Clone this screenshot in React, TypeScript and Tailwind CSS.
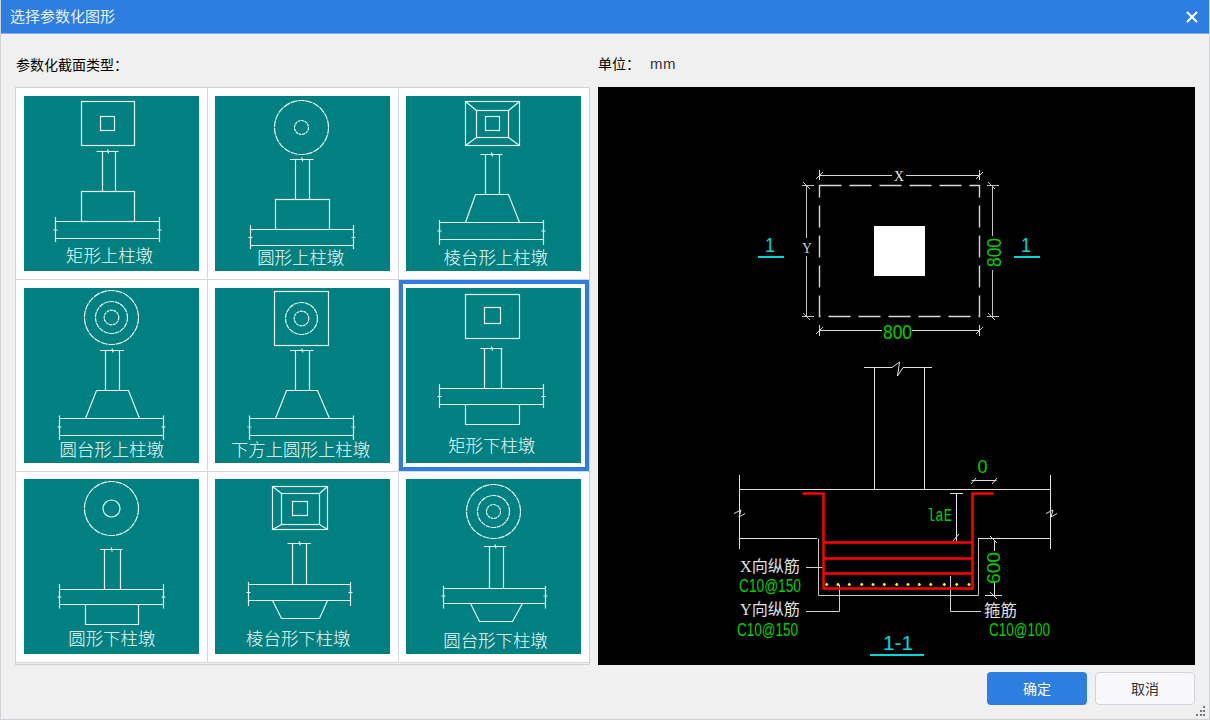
import type { ReactNode } from "react";
import { X } from "lucide-react";

const Stem = ({ a, b, top, bottom, l, r }: { a: number; b: number; top: number; bottom: number; l: number; r: number }) => {
  const mid = (l + r) / 2;
  return <path d={`M${l} ${top}H${r}M${a} ${top}V${bottom}M${b} ${top}V${bottom}M${mid} ${top - 2}l1 4`} />;
};

const Slab = ({ a, b, top, bottom, t1, t2 }: { a: number; b: number; top: number; bottom: number; t1: number; t2: number }) => {
  const mid = (top + bottom) / 2;
  return <path d={`M${a} ${top}H${b}M${a} ${bottom}H${b}M${a} ${t1}V${t2}M${b} ${t1}V${t2}M${a - 2} ${mid}h4M${b - 2} ${mid}h4`} />;
};

const Box = ({ x, y, w, h }: { x: number; y: number; w: number; h: number }) => <rect x={x} y={y} width={w} height={h} />;

const Thumb = ({ label, tx, ty, children }: { label: string; tx: number; ty: number; children: ReactNode }) => (
  <svg width="175" height="175" viewBox="0 0 175 175" className="block bg-[#008080]">
    <g fill="none" stroke="#e8f5f4" strokeWidth="1.2">{children}</g>
    <text
      x={tx}
      y={ty}
      textAnchor="middle"
      fill="#f4fbfa"
      className="font-['Noto_Sans_CJK_SC',sans-serif] text-[17.4px] font-light"
    >
      {label}
    </text>
  </svg>
);

const thumbs = [
  {
    label: "矩形上柱墩", tx: 85.5, ty: 166, cell: "pl-2 pt-2 border-r border-b",
    art: (
      <>
        <Box x={57.5} y={5.5} w={53} h={44} />
        <Box x={76.5} y={20.5} w={14} h={14} />
        <Stem a={78.5} b={91.5} top={55.5} bottom={95.5} l={72.5} r={94.5} />
        <Box x={57.5} y={95.5} w={53} h={30} />
        <Slab a={31.5} b={135.5} top={125.5} bottom={142.5} t1={121} t2={146} />
      </>
    ),
  },
  {
    label: "圆形上柱墩", tx: 85.7, ty: 168, cell: "pl-[7px] pt-2 border-r border-b",
    art: (
      <>
        <circle cx={86.5} cy={31.5} r={27} strokeDasharray="7 0.7" />
        <circle cx={86.5} cy={31.5} r={7} strokeDasharray="3 0.6" />
        <Stem a={80.5} b={94.5} top={63.5} bottom={103.5} l={75} r={98.5} />
        <Box x={60.5} y={103.5} w={54} h={30} />
        <Slab a={35.5} b={138.5} top={133.5} bottom={149.5} t1={129} t2={153} />
      </>
    ),
  },
  {
    label: "棱台形上柱墩", tx: 89.8, ty: 168, cell: "pl-[7px] pt-2 border-b",
    art: (
      <>
        <Box x={59.5} y={5.5} w={54} h={44} />
        <Box x={70.5} y={14.5} w={32} h={27} />
        <Box x={79.5} y={20.5} w={14} h={14} />
        <path d="M59.5 5.5L70.5 14.5M113.5 5.5L102.5 14.5M59.5 49.5L70.5 41.5M113.5 49.5L102.5 41.5" />
        <Stem a={79.5} b={93.5} top={58.5} bottom={98.5} l={74.5} r={96.5} />
        <path d="M69.5 98.5H102.5L113.5 126.5M69.5 98.5L59.5 126.5" />
        <Slab a={33.5} b={137.5} top={126.5} bottom={143.5} t1={124} t2={149} />
      </>
    ),
  },
  {
    label: "圆台形上柱墩", tx: 87.7, ty: 168, cell: "pl-2 pt-2 border-r border-b",
    art: (
      <>
        <circle cx={87.5} cy={29.5} r={27} strokeDasharray="7 0.7" />
        <circle cx={87.5} cy={29.5} r={16} strokeDasharray="5 0.6" />
        <circle cx={87.5} cy={29.5} r={7.3} strokeDasharray="3 0.6" />
        <Stem a={81.5} b={95.5} top={62.5} bottom={102.5} l={76} r={100} />
        <path d="M61.5 130.5L72.5 102.5H104.5L115.5 130.5" />
        <Slab a={35.5} b={139.5} top={130.5} bottom={147.5} t1={127.5} t2={152} />
      </>
    ),
  },
  {
    label: "下方上圆形上柱墩", tx: 85.5, ty: 168, cell: "pl-[7px] pt-2 border-r border-b",
    art: (
      <>
        <Box x={59.5} y={3.5} w={54} h={54} />
        <circle cx={86.5} cy={30.5} r={16} strokeDasharray="5 0.6" />
        <circle cx={86.5} cy={30.5} r={7.3} strokeDasharray="3 0.6" />
        <Stem a={80.5} b={94.5} top={62.5} bottom={102.5} l={75} r={98.5} />
        <path d="M60.5 130.5L71.5 102.5H102.5L114.5 130.5" />
        <Slab a={34.5} b={138.5} top={130.5} bottom={147.5} t1={127.5} t2={152} />
      </>
    ),
  },
  {
    label: "矩形下柱墩", tx: 85.7, ty: 164, cell: "relative pl-[7px] pt-2 border-b", selected: true,
    art: (
      <>
        <Box x={59.5} y={6.5} w={54} h={44} />
        <Box x={78.5} y={19.5} w={16} h={16} />
        <Stem a={78.5} b={95.5} top={60.5} bottom={100.5} l={74.5} r={96.5} />
        <Slab a={33.5} b={137.5} top={100.5} bottom={116.5} t1={96} t2={120} />
        <path d="M59.5 116.5V136.5H113.5V116.5" />
      </>
    ),
  },
  {
    label: "圆形下柱墩", tx: 87.8, ty: 166, cell: "pl-2 pt-[7px] border-r",
    art: (
      <>
        <circle cx={87.5} cy={29.5} r={27} strokeDasharray="7 0.7" />
        <circle cx={87.5} cy={29.5} r={8.5} />
        <Stem a={80.5} b={96.5} top={70.5} bottom={110.5} l={76} r={98.5} />
        <Slab a={35.5} b={139.5} top={110.5} bottom={125.5} t1={105} t2={129.5} />
        <path d="M61.5 125.5V145.5H114.5V125.5" />
      </>
    ),
  },
  {
    label: "棱台形下柱墩", tx: 83.3, ty: 166, cell: "pl-[7px] pt-[7px] border-r",
    art: (
      <>
        <Box x={57.5} y={7.5} w={55} h={43} />
        <Box x={66.5} y={14.5} w={38} h={31} />
        <Box x={77.5} y={22.5} w={15} h={14} />
        <path d="M57.5 7.5L66.5 14.5M112.5 7.5L104.5 14.5M57.5 50.5L66.5 45.5M112.5 50.5L104.5 45.5" />
        <Stem a={77.5} b={91.5} top={64.5} bottom={105.5} l={72.5} r={96} />
        <Slab a={33.5} b={135.5} top={105.5} bottom={121.5} t1={103} t2={127} />
        <path d="M57.5 121.5L66.5 139.5H104.5L112.5 121.5" />
      </>
    ),
  },
  {
    label: "圆台形下柱墩", tx: 89.5, ty: 168, cell: "pl-[7px] pt-[7px]",
    art: (
      <>
        <circle cx={87.5} cy={32.5} r={27} strokeDasharray="7 0.7" />
        <circle cx={87.5} cy={32.5} r={16} strokeDasharray="5 0.6" />
        <circle cx={87.5} cy={32.5} r={7} strokeDasharray="3 0.6" />
        <Stem a={83.5} b={97.5} top={67.5} bottom={109.5} l={78} r={100} />
        <Slab a={37.5} b={139.5} top={109.5} bottom={124.5} t1={107} t2={129.5} />
        <path d="M64.5 124.5L73.5 142.5H106.5L116.5 124.5" />
      </>
    ),
  },
];

const dotXs = [826.7, 838, 849.3, 861.7, 873, 884.3, 896.7, 908, 919.3, 930.7, 944.3, 956.7, 969];

const sansFont = "font-['Liberation_Sans','Noto_Sans_CJK_SC',sans-serif]";
const monoFont = "font-['Liberation_Mono','Noto_Sans_CJK_SC',monospace]";
const serifFont = "font-['Liberation_Serif','Noto_Sans_CJK_SC',serif]";

const CadText = ({ x, y, width, size = 18, fill = "#00d000", rotate, font = sansFont, children }: { x: number; y: number; width: number; size?: number; fill?: string; rotate?: boolean; font?: string; children: string }) => (
  <text
    x={x}
    y={y}
    fill={fill}
    fontSize={size}
    textLength={width}
    lengthAdjust="spacingAndGlyphs"
    transform={rotate ? `rotate(-90 ${x} ${y})` : undefined}
    className={font}
  >
    {children}
  </text>
);

const Drawing = () => (
  <svg width="597" height="578" viewBox="598 87 597 578" className="block bg-black">
    {/* plan */}
    <g fill="none" stroke="#d8d8d8" strokeWidth="1">
      <rect x={819.5} y={185.5} width={160} height={131} strokeDasharray="22 8" strokeWidth="1.4" />
      <path d="M819.5 175.5H892M906 175.5H979.5M819.5 170V180M979.5 170V180M816 179l7-7M976 179l7-7" />
      <path d="M819.5 330.5H882M912 330.5H979.5M819.5 325V336M979.5 325V336M816 334l7-7M976 334l7-7" />
      <path d="M806.5 185.5V238M806.5 256V316.5M802 185.5H814M802 316.5H814M803 182l7 7M803 313l7 7" stroke="#c4c4c4" />
      <path d="M992.5 185.5V236M992.5 270V316.5M987 185.5H999M987 316.5H999M988 182l7 7M988 313l7 7" stroke="#c4c4c4" />
    </g>
    <rect x={874} y={226} width={51} height={50} fill="#fff" />
    <CadText x={894} y={181} width={10} size={15} fill="#e8e8e8" font={serifFont}>X</CadText>
    <CadText x={802} y={253} width={10} size={15} fill="#d0d0d0" font={serifFont}>Y</CadText>
    <CadText x={883} y={339} width={29} size={20}>800</CadText>
    <CadText x={1001} y={267} width={29} size={20} rotate>800</CadText>
    <CadText x={765} y={252} width={10} size={21} fill="#00d8d8">1</CadText>
    <CadText x={1021} y={252} width={10} size={21} fill="#00d8d8">1</CadText>
    <rect x={758} y={256} width={26} height={2} fill="#00d8d8" />
    <rect x={1014} y={256} width={26} height={2} fill="#00d8d8" />

    {/* section */}
    <g fill="none" stroke="#e0e0e0" strokeWidth="1">
      <path d="M864 367.5H892L899.5 362L897.5 376L903 367.5H932M874.5 367.5V489M924.5 367.5V489" />
      <path d="M739.5 489.5H1050.5M739.5 538.5H817M978 538.5H1050.5M739.5 475V549M1050.5 475V549" />
      <path d="M734 513.5L741 510L739 517L745 513.5M1046 513.5L1053 510L1051 517L1057 513.5" />
      <path d="M818.5 538.5V595.5H978.5V538.5" stroke="#c4c4c4" />
      <path d="M971.5 480.5H996.5M971 484l5-6M992 484l5-6" />
      <path d="M956.5 493.5V541.5M950 493.5H963M953 541l6-7" />
      <path d="M994.5 540V551M994.5 583V595.5M985 595.5H1002M990 536l7 7M990 592l7 7" />
      <path d="M806 567.5H824M806 611.5H839.5V585M950.5 576V611.5H981" stroke="#cfcfcf" />
    </g>
    <g fill="none" stroke="#ff0000" strokeWidth="2.5">
      <path d="M802.5 493.5H823.5V588.5H972.5V493.5H993.5" />
      <path d="M823.5 542.5H972.5M823.5 558.5H972.5M823.5 573.5H972.5" />
    </g>
    <g stroke="#ffff00" strokeWidth="1.4">
      {dotXs.map((x) => (
        <path key={x} d={`M${x - 1.5} 584.5h3M${x} 583v3`} />
      ))}
    </g>
    <CadText x={977.5} y={473} width={10}>0</CadText>
    <CadText x={927} y={521} width={25} size={18} font={monoFont}>laE</CadText>
    <CadText x={1000} y={584} width={32} rotate>600</CadText>
    <CadText x={740} y={572} width={60} size={16} fill="#e0e0e0" font={serifFont}>X向纵筋</CadText>
    <CadText x={739} y={592} width={62}>C10@150</CadText>
    <CadText x={740} y={615} width={60} size={16} fill="#e0e0e0" font={serifFont}>Y向纵筋</CadText>
    <CadText x={737} y={636} width={61}>C10@150</CadText>
    <CadText x={984} y={616} width={33} size={16} fill="#e0e0e0">箍筋</CadText>
    <CadText x={989} y={636} width={61}>C10@100</CadText>
    <CadText x={883} y={650} width={30} size={21} fill="#00d8d8">1-1</CadText>
    <rect x={870} y={654} width={54} height={2} fill="#00d8d8" />
  </svg>
);

const App = () => (
  <div className="relative flex h-[720px] w-[1210px] flex-col overflow-hidden border-x border-b border-[#cdd1d8] bg-[#f0f0f0] font-['Noto_Sans_CJK_SC',sans-serif]">
    {/* Title bar */}
    <div className="-mx-px flex h-[34px] shrink-0 items-center justify-between border-b border-[#7fb0ee] bg-[#2e7de1] pl-[10px] pr-[9px] text-[15px] text-[#e8f1fc]">
      <span>选择参数化图形</span>
      <X className="h-[18px] w-[18px] text-white" strokeWidth={2.6} />
    </div>

    <div className="flex flex-1 flex-col pl-[14px] pr-[14px]">
      {/* Labels */}
      <div className="flex h-[53px] shrink-0 items-center pt-[8px] text-[14px] text-black">
        <div className="w-[583px] pl-px">参数化截面类型：</div>
        <div className="flex gap-[10px]">
          <span>单位：</span>
          <span className="font-['Liberation_Sans',sans-serif] text-[15px] tracking-[0.5px] text-[#333]">mm</span>
        </div>
      </div>

      {/* Panels */}
      <div className="flex h-[578px] shrink-0 gap-2">
        <div className="h-[578px] w-[575px] border border-[#cfd3d9]">
          <div className="grid grid-cols-[192px_191px_190px] grid-rows-[192px_192px_190px] bg-white">
            {thumbs.map((t) => (
              <div key={t.label} className={`border-[#d4d7dc] ${t.cell}`}>
                <Thumb label={t.label} tx={t.tx} ty={t.ty}>
                  {t.art}
                </Thumb>
                {t.selected && <div className="absolute inset-0 border-4 border-[#2e7de1]" />}
              </div>
            ))}
          </div>
          <div className="h-px bg-[#d4d7dc]" />
        </div>
        <Drawing />
      </div>

      {/* Buttons */}
      <div className="flex justify-end gap-2 pt-[7px]">
        <button className="h-[33px] w-[100px] rounded-[4px] bg-[#2e7de1] text-[14px] text-white">确定</button>
        <button className="h-[33px] w-[100px] rounded-[4px] border border-[#cfd5e0] bg-[#f8f8fa] text-[14px] text-[#333]">取消</button>
      </div>
    </div>

    {/* Resize grip */}
    <svg width="10" height="10" viewBox="0 0 10 10" className="absolute bottom-[3px] right-[3px]" fill="#777">
      <rect x="7" y="0" width="2" height="2" />
      <rect x="4" y="4" width="2" height="2" />
      <rect x="7" y="4" width="2" height="2" />
      <rect x="0" y="8" width="2" height="2" />
      <rect x="4" y="8" width="2" height="2" />
      <rect x="7" y="8" width="2" height="2" />
    </svg>
  </div>
);

export default App;
